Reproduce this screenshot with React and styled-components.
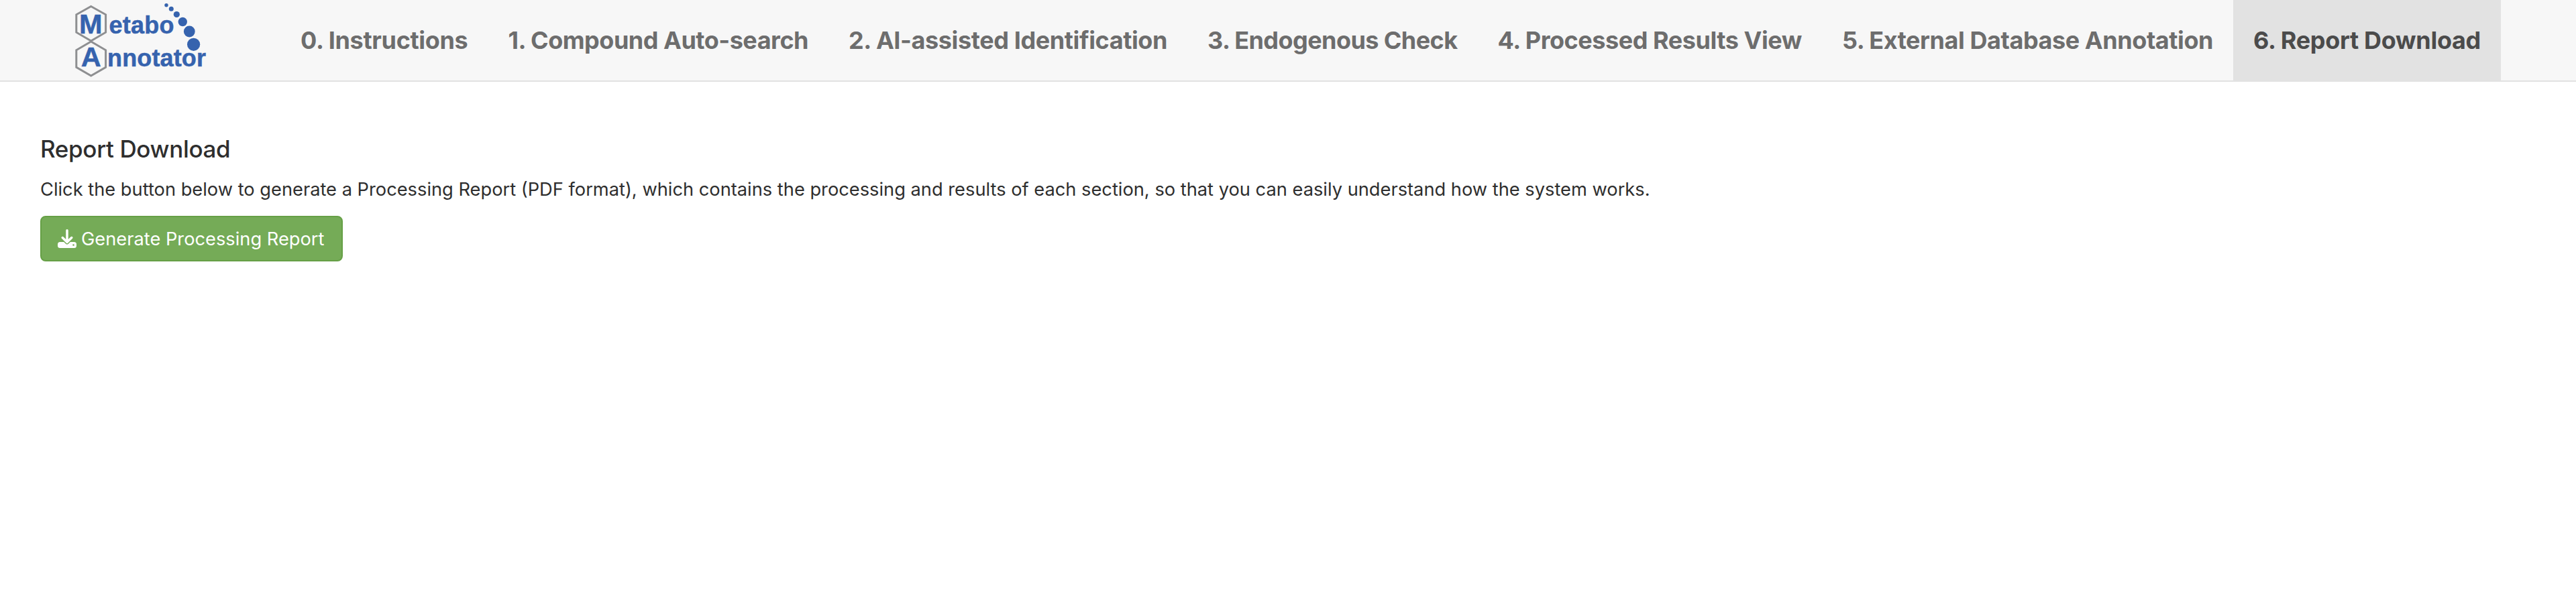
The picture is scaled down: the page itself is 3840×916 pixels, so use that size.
import React from "react";
import styled, { createGlobalStyle } from "styled-components";

const GlobalStyle = createGlobalStyle`
  * { box-sizing: border-box; }
  body {
    margin: 0;
    background: #fff;
    color: #2e2e2e;
    font-family: Inter, "Liberation Sans", sans-serif;
  }
`;

const Navbar = styled.nav`
  display: flex;
  height: 122px;
  padding-left: 90px;
  background: #f7f7f7;
  border-bottom: 2px solid #e2e2e2;
`;

const Brand = styled.a`
  display: block;
  width: 328px;
  height: 120px;
`;

const Tabs = styled.ul`
  display: flex;
  margin: 0;
  padding: 0;
  list-style: none;
`;

const Tab = styled.li`
  display: flex;
  justify-content: center;
  flex: none;
  width: ${(p) => p.$width}px;
  height: 120px;
  line-height: 121px;
  font-size: 36px;
  font-weight: 700;
  letter-spacing: ${(p) => p.$tracking}px;
  white-space: nowrap;
  color: ${(p) => (p.$active ? "#4b4b4b" : "#6d6d6d")};
  background: ${(p) => (p.$active ? "#e2e2e2" : "transparent")};
`;

const Page = styled.main`
  display: flex;
  flex-direction: column;
  align-items: flex-start;
  padding: 78px 60px 0;
`;

const Title = styled.h4`
  margin: 0;
  line-height: 44px;
  font-size: 35px;
  font-weight: 500;
  letter-spacing: -0.35px;
`;

const Description = styled.p`
  margin: 19px 0 0;
  line-height: 40px;
  font-size: 27.25px;
  white-space: nowrap;
`;

const GenerateButton = styled.button`
  display: flex;
  align-items: center;
  gap: 7px;
  width: 451px;
  height: 68px;
  margin-top: 19px;
  padding: 0 0 0 24px;
  border: 2px solid #66a046;
  border-radius: 8px;
  background: #75ab57;
  color: #fff;
  font-family: inherit;
  font-size: 27.25px;
  white-space: nowrap;
`;

const TABS = [
  { label: "0. Instructions", width: 309.5, tracking: -0.33 },
  { label: "1. Compound Auto-search", width: 507.5, tracking: -0.48 },
  { label: "2. AI-assisted Identification", width: 535, tracking: -0.39 },
  { label: "3. Endogenous Check", width: 432.5, tracking: -0.57 },
  { label: "4. Processed Results View", width: 513.5, tracking: -0.45 },
  { label: "5. External Database Annotation", width: 613, tracking: -0.43 },
  { label: "6. Report Download", width: 399, tracking: -0.31 },
];

const BrandText = styled.text`
  font-family: "Liberation Sans", Arial, sans-serif;
  font-weight: 700;
  font-size: ${(p) => (p.$initial ? 41.5 : 36)}px;
  fill: #3663ae;
  stroke: #3663ae;
  stroke-width: 0.5px;
`;

function Logo() {
  return (
    <svg width="240" height="120" viewBox="0 0 240 120" role="img" aria-label="Metabo Annotator">
      <g fill="none" stroke="#8e8f91" strokeWidth="3">
        <path d="M45.7 9.5 67.6 21.8V48.2L45.7 61 23.8 48.2V21.8Z" />
        <path d="M45.7 62 67.6 74.8V100.4L45.7 113 23.8 100.4V74.8Z" />
      </g>
      <BrandText $initial x="28" y="50">M</BrandText>
      <BrandText x="72.5" y="50" textLength="97">etabo</BrandText>
      <BrandText $initial x="30.7" y="99">A</BrandText>
      <BrandText x="70" y="99" textLength="147">nnotator</BrandText>
      <g fill="#3663ae">
        <circle cx="158" cy="7.7" r="2.7" />
        <circle cx="165.3" cy="13.3" r="3.5" />
        <circle cx="173.3" cy="21.5" r="4.6" />
        <circle cx="182.3" cy="32.5" r="6.7" />
        <circle cx="192.3" cy="47" r="8.4" />
        <circle cx="198.6" cy="66.3" r="9.6" />
      </g>
    </svg>
  );
}

function DownloadIcon() {
  const arrow = "M14 1.8V18.5M7.2 12.5 14 19.3 20.8 12.5";
  return (
    <svg width="28" height="28" viewBox="0 0 28 28" fill="none" strokeLinecap="round" strokeLinejoin="round" aria-hidden="true">
      <rect x="0" y="19" width="28" height="9" rx="3.5" fill="#fff" />
      <path d="M7.5 12.8 14 19.3 20.5 12.8" stroke="#75ab57" strokeWidth="6.4" />
      <path d={arrow} stroke="#fff" strokeWidth="3.5" />
      <circle cx="23.5" cy="23.5" r="1.3" fill="#75ab57" />
    </svg>
  );
}

export default function App() {
  return (
    <>
      <GlobalStyle />
      <Navbar>
        <Brand>
          <Logo />
        </Brand>
        <Tabs>
          {TABS.map((tab, i) => (
            <Tab key={tab.label} $width={tab.width} $tracking={tab.tracking} $active={i === 6}>
              {tab.label}
            </Tab>
          ))}
        </Tabs>
      </Navbar>
      <Page>
        <Title>Report Download</Title>
        <Description>
          Click the button below to generate a Processing Report (PDF format), which contains the
          processing and results of each section, so that you can easily understand how the system
          works.
        </Description>
        <GenerateButton type="button">
          <DownloadIcon />
          Generate Processing Report
        </GenerateButton>
      </Page>
    </>
  );
}
